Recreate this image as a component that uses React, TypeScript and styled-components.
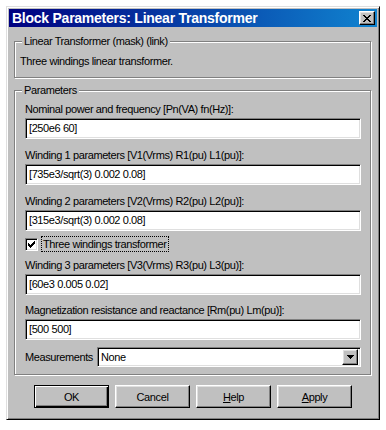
import React from 'react';
import styled, { createGlobalStyle } from 'styled-components';

const GlobalStyle = createGlobalStyle`
  body {
    margin: 0;
    background: #fff;
    font-family: "Liberation Sans", Arial, sans-serif;
    font-size: 11px;
    letter-spacing: -0.4px;
    color: #000;
  }
`;

const Page = styled.div`
  padding: 6px;
`;

const Window = styled.div`
  width: 374px;
  box-sizing: border-box;
  background: #c0c0c0;
  border: 1px solid;
  border-color: #dfdfdf #000 #000 #dfdfdf;
  box-shadow: inset 1px 1px #fff, inset -1px -1px #808080;
  padding: 2px 2px 11px;
`;

const TitleBar = styled.div`
  height: 18px;
  display: flex;
  align-items: center;
  justify-content: space-between;
  padding: 0 2px 0 3px;
  background: linear-gradient(to right, #000080, #1084d0);
  color: #fff;
  font-weight: bold;
  font-size: 14px;
  letter-spacing: -0.25px;
`;

const raised = `
  background: #c0c0c0;
  border: 1px solid;
  border-color: #fff #000 #000 #fff;
  box-shadow: inset -1px -1px #808080, inset 1px 1px #dfdfdf;
`;

const sunken = `
  border: 1px solid;
  border-color: #808080 #fff #fff #808080;
  box-shadow: inset 1px 1px #000, inset -1px -1px #dfdfdf;
`;

const CloseButton = styled.div`
  ${raised}
  width: 16px;
  height: 14px;
  box-sizing: border-box;
  display: flex;
  align-items: center;
  justify-content: center;
`;

const Body = styled.div`
  padding: 14px 5px 0;
`;

const GroupBox = styled.div<{ $gap?: number }>`
  position: relative;
  margin-top: ${p => p.$gap ?? 0}px;
  border: 1px solid #808080;
  box-shadow: 1px 1px 0 #fff, inset 1px 1px 0 #fff;
  width: 357px;
  box-sizing: border-box;
`;

const Caption = styled.div`
  position: absolute;
  top: -8px;
  left: 7px;
  padding: 0 2px;
  line-height: 15px;
  background: #c0c0c0;
`;

const Description = styled.div`
  padding: 11px 5px 8px;
  line-height: 16px;
`;

const Fields = styled.div`
  padding: 10px 9px 7px 10px;
  display: flex;
  flex-direction: column;
`;

const Label = styled.div<{ $top?: number }>`
  line-height: 16px;
  margin-top: ${p => p.$top ?? 0}px;
`;

const Edit = styled.div`
  ${sunken}
  background: #fff;
  height: 21px;
  box-sizing: border-box;
  margin-top: 1px;
  padding: 0 3px;
  line-height: 19px;
  white-space: nowrap;
`;

const CheckRow = styled.div`
  display: flex;
  align-items: center;
  gap: 4px;
  margin-top: 5px;
  height: 16px;
`;

const CheckBox = styled.div`
  ${sunken}
  width: 13px;
  height: 13px;
  box-sizing: border-box;
  background: #fff;
  display: flex;
  align-items: center;
  justify-content: center;
`;

const FocusLabel = styled.span`
  outline: 1px dotted #000;
  outline-offset: 0;
  padding: 0 1px;
  line-height: 14px;
`;

const SelectRow = styled.div`
  display: flex;
  align-items: center;
  gap: 4px;
  margin-top: 7px;
`;

const Select = styled.div`
  ${sunken}
  flex: 1;
  height: 20px;
  box-sizing: border-box;
  background: #fff;
  display: flex;
  align-items: center;
  justify-content: space-between;
  padding: 2px 2px 2px 3px;
`;

const DropButton = styled.div`
  ${raised}
  width: 16px;
  height: 16px;
  box-sizing: border-box;
  display: flex;
  align-items: center;
  justify-content: center;
`;

const ButtonRow = styled.div`
  display: flex;
  justify-content: center;
  gap: 6px;
  margin-top: 10px;
`;

const Button = styled.div<{ $default?: boolean }>`
  width: 75px;
  height: 23px;
  box-sizing: border-box;
  display: flex;
  align-items: center;
  justify-content: center;
  background: #c0c0c0;
  border: 1px solid;
  border-color: ${p => (p.$default ? '#000' : '#fff #000 #000 #fff')};
  box-shadow: ${p =>
    p.$default
      ? 'inset 1px 1px #fff, inset -1px -1px #000, inset -2px -2px #808080'
      : 'inset -1px -1px #808080, inset 1px 1px #dfdfdf'};
`;

const Pixels: React.FC<{ rows: string[] }> = ({ rows }) => (
  <svg width={rows[0].length} height={rows.length} shapeRendering="crispEdges">
    {rows.map((row, y) =>
      row.split('').map((c, x) => (c === 'X' ? <rect key={`${x}-${y}`} x={x} y={y} width={1} height={1} fill="#000" /> : null))
    )}
  </svg>
);

const closeGlyph = ['XX....XX', '.XX..XX.', '..XXXX..', '...XX...', '..XXXX..', '.XX..XX.', 'XX....XX'];
const checkGlyph = ['......X', '.....XX', 'X...XXX', 'XX.XXX.', 'XXXXX..', '.XXX...', '..X....'];
const arrowGlyph = ['XXXXXXX', '.XXXXX.', '..XXX..', '...X...'];

const fields = [
  { label: 'Nominal power and frequency [Pn(VA) fn(Hz)]:', value: '[250e6 60]' },
  { label: 'Winding 1 parameters [V1(Vrms) R1(pu) L1(pu)]:', value: '[735e3/sqrt(3) 0.002 0.08]' },
  { label: 'Winding 2 parameters [V2(Vrms) R2(pu) L2(pu)]:', value: '[315e3/sqrt(3) 0.002 0.08]' },
];

const moreFields = [
  { label: 'Winding 3 parameters [V3(Vrms) R3(pu) L3(pu)]:', value: '[60e3 0.005 0.02]' },
  { label: 'Magnetization resistance and reactance [Rm(pu) Lm(pu)]:', value: '[500 500]' },
];

const App: React.FC = () => {
  return (
    <Page>
      <GlobalStyle />
      <Window>
        <TitleBar>
          <span>Block Parameters: Linear Transformer</span>
          <CloseButton>
            <Pixels rows={closeGlyph} />
          </CloseButton>
        </TitleBar>
        <Body>
          <GroupBox>
            <Caption>Linear Transformer (mask) (link)</Caption>
            <Description>Three windings linear transformer.</Description>
          </GroupBox>
          <GroupBox $gap={12}>
            <Caption>Parameters</Caption>
            <Fields>
              {fields.map((f, i) => (
                <React.Fragment key={f.label}>
                  <Label $top={i === 0 ? 0 : 8}>{f.label}</Label>
                  <Edit>{f.value}</Edit>
                </React.Fragment>
              ))}
              <CheckRow>
                <CheckBox>
                  <Pixels rows={checkGlyph} />
                </CheckBox>
                <FocusLabel>Three windings transformer</FocusLabel>
              </CheckRow>
              {moreFields.map((f, i) => (
                <React.Fragment key={f.label}>
                  <Label $top={i === 0 ? 5 : 7}>{f.label}</Label>
                  <Edit>{f.value}</Edit>
                </React.Fragment>
              ))}
              <SelectRow>
                <span>Measurements</span>
                <Select>
                  <span>None</span>
                  <DropButton>
                    <Pixels rows={arrowGlyph} />
                  </DropButton>
                </Select>
              </SelectRow>
            </Fields>
          </GroupBox>
          <ButtonRow>
            <Button $default>OK</Button>
            <Button>Cancel</Button>
            <Button>
              <span><u>H</u>elp</span>
            </Button>
            <Button>
              <span><u>A</u>pply</span>
            </Button>
          </ButtonRow>
        </Body>
      </Window>
    </Page>
  );
};

export default App;
